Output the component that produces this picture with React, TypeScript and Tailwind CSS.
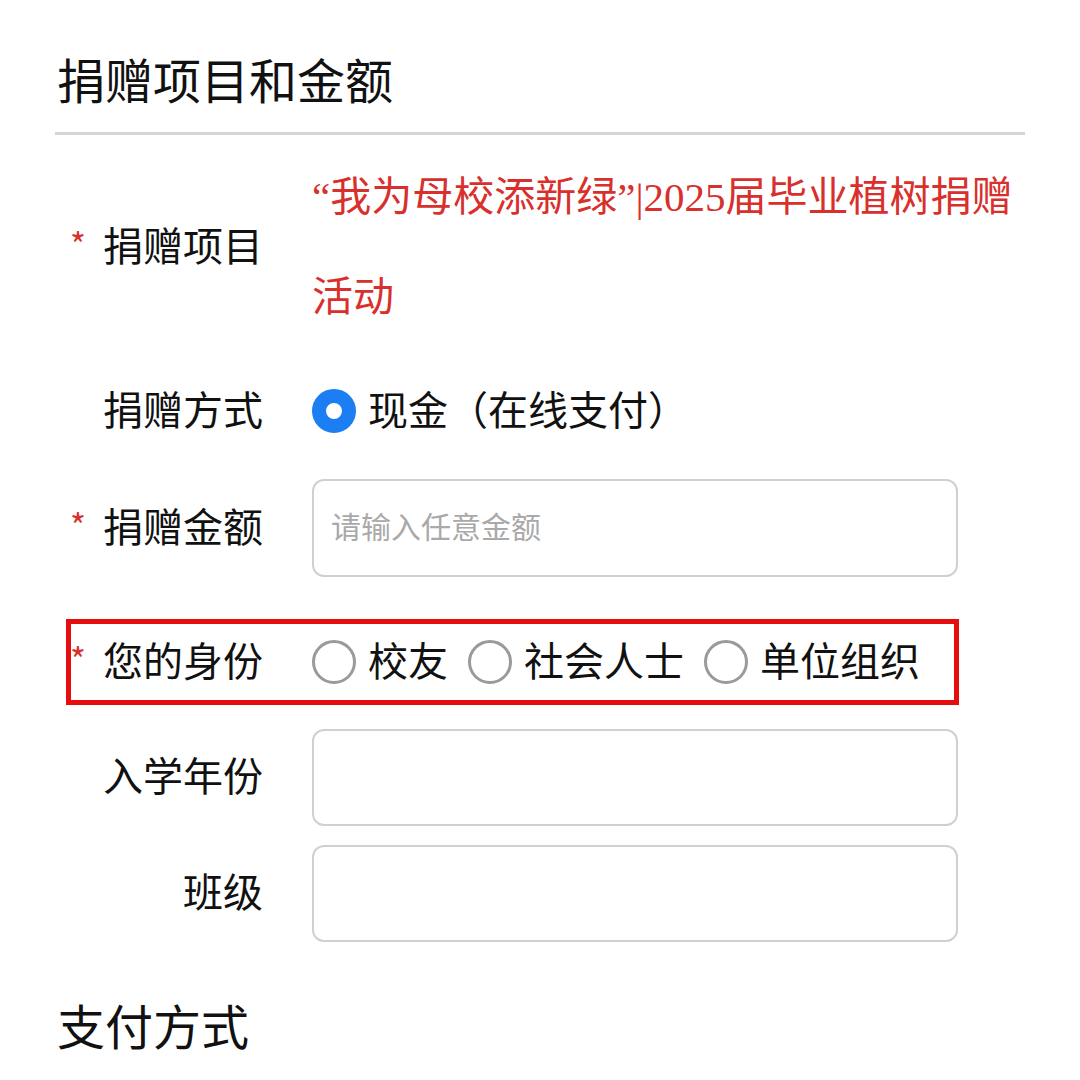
import type { ReactNode } from "react"

const Required = () => <span className="mr-[17px] text-[34px] leading-none text-[#d8302c]">*</span>

function Row({ label, required, className = "", labelWidth = "w-[257px]", children }: {
  label: string
  required?: boolean
  className?: string
  labelWidth?: string
  children: ReactNode
}) {
  return (
    <div className={`flex items-center ${className}`}>
      <div className={`${labelWidth} shrink-0 pr-[49px] pb-[7px] flex items-center justify-end whitespace-nowrap text-[40px] leading-[48px] text-[#111]`}>
        {required && <Required />}
        <span>{label}</span>
      </div>
      {children}
    </div>
  )
}

function Radio({ checked, label }: { checked?: boolean; label: string }) {
  return (
    <label className="flex items-center gap-[12px] mr-[20px]">
      {checked ? (
        <span className="h-[44px] w-[44px] rounded-full border-[14px] border-[#1b7ef3] bg-white" />
      ) : (
        <span className="h-[44px] w-[44px] rounded-full border-[3px] border-[#9a9a9a] bg-white" />
      )}
      <span className="pb-[7px] whitespace-nowrap text-[40px] leading-[48px] text-[#111]">{label}</span>
    </label>
  )
}

function TextBox({ placeholder }: { placeholder?: string }) {
  return (
    <input
      readOnly
      placeholder={placeholder}
      className="h-full w-[646px] rounded-[12px] border-2 border-[#d0d0d0] bg-white pl-[17px] pb-[6px] text-[30px] outline-none placeholder:text-[#a9a9a9]"
    />
  )
}

export default function App() {
  return (
    <div className="min-h-[1080px] w-[1080px] bg-white font-['Noto_Sans_CJK_SC',sans-serif] text-[#111]">
      <div className="ml-[55px] w-[970px]">
        {/* 捐赠项目和金额 */}
        <h2 className="pl-[2px] pt-[54px] pb-[30px] text-[48px] leading-[48px] font-normal">捐赠项目和金额</h2>
        <div className="h-[3px] bg-[#d6d6d6]" />

        <Row label="捐赠项目" required className="mt-[12px]">
          <p className="w-[713px] font-['Liberation_Serif','Noto_Sans_CJK_SC',serif] text-[41px] leading-[100px] text-[#d8302c]">
            “我为母校添新绿”|2025届毕业植树捐赠活动
          </p>
        </Row>

        <Row label="捐赠方式" className="mt-[14px] h-[100px]">
          <Radio checked label="现金（在线支付）" />
        </Row>

        <Row label="捐赠金额" required className="mt-[18px] h-[98px]">
          <TextBox placeholder="请输入任意金额" />
        </Row>

        {/* highlighted identity row */}
        <div className="ml-[11px] mt-[42px] h-[86px] w-[893px] border-[5px] border-[#e50d0d]">
          <Row label="您的身份" required labelWidth="w-[241px]" className="h-full">
            <Radio label="校友" />
            <Radio label="社会人士" />
            <Radio label="单位组织" />
          </Row>
        </div>

        <Row label="入学年份" className="mt-[24px] h-[97px]">
          <TextBox />
        </Row>

        <Row label="班级" className="mt-[19px] h-[97px]">
          <TextBox />
        </Row>

        <h2 className="pl-[2px] mt-[58px] text-[48px] leading-[48px] font-normal">支付方式</h2>
      </div>
    </div>
  )
}
